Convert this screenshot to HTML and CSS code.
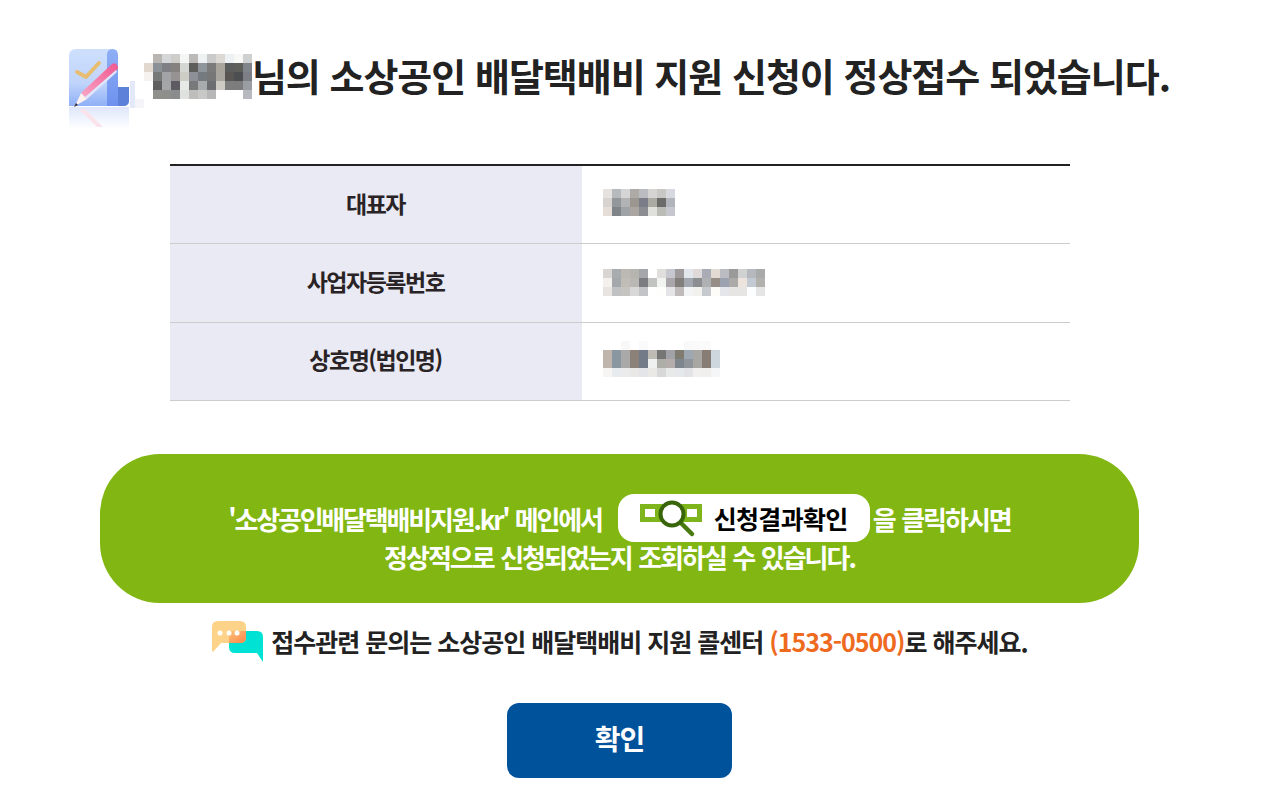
FILE: index.html
```html
<!DOCTYPE html>
<html lang="ko">
<head>
<meta charset="utf-8">
<title>소상공인 배달택배비 지원 신청</title>
<link rel="stylesheet" href="styles.css">
</head>
<body>
<main class="wrap">
  <h1 class="title">
    <svg class="title-icon" width="75" height="82" viewBox="0 0 75 82">
      <defs>
        <linearGradient id="pg" x1="0" y1="0" x2="0" y2="1"><stop offset="0" stop-color="#cfe0fd"/><stop offset="0.6" stop-color="#c0d4fb"/><stop offset="1" stop-color="#8fb0f7"/></linearGradient>
        <linearGradient id="col" x1="0" y1="0" x2="0" y2="1"><stop offset="0" stop-color="#8fb0f5"/><stop offset="1" stop-color="#6d90ef"/></linearGradient>
        <linearGradient id="pen" x1="0" y1="1" x2="1" y2="0"><stop offset="0" stop-color="#f9a9c8"/><stop offset="1" stop-color="#f0568f"/></linearGradient>
        <linearGradient id="rf" x1="0" y1="0" x2="0" y2="1"><stop offset="0" stop-color="#dfe7fc"/><stop offset="1" stop-color="#fff"/></linearGradient>
      </defs>
      <path d="M7 0H44V57H0V7Q0 0 7 0Z" fill="url(#pg)"/>
      <path d="M38 6Q38 0 43.500 0Q49 0 49 6V38H60V51Q60 57 54 57H38Z" fill="url(#col)"/>
      <path d="M49 38H60V51Q60 57 54 57H49Z" fill="#5d80d8"/>
      <path d="M8 23L17 28L30 14" fill="none" stroke="#e7bd72" stroke-width="4" stroke-linejoin="round" stroke-linecap="round"/>
      <path d="M12 44L43 15Q46 13 48 16Q50 19 48 21L18 50Z" fill="url(#pen)"/>
      <path d="M18 50L48 23L47 21L16 48Z" fill="#dfe6fb"/>
      <path d="M12 44L18 50L6 57Z" fill="#fdf2ee"/>
      <path d="M7 54L9 56L5 58Z" fill="#333"/>
      <path d="M0 58H60V80H0Z" fill="url(#rf)"/>
      <path d="M10 60L28 78L34 78L16 60Z" fill="#fbe3ec"/>
      <rect x="61" y="32" width="5" height="27" fill="#e4e9fa"/>
      <rect x="66" y="50" width="9" height="9" fill="#f5f5f9"/>
    </svg>
    <svg class="mosaic-name" width="108" height="45" viewBox="0 0 108 45">
      <rect x="9" y="0" width="9" height="9" fill="#b9b5b2"/><rect x="18" y="0" width="9" height="9" fill="#d4d6d8"/><rect x="27" y="0" width="9" height="9" fill="#cfcdca"/><rect x="36" y="0" width="9" height="9" fill="#f4f6f5"/><rect x="45" y="0" width="9" height="9" fill="#bdb9b9"/><rect x="54" y="0" width="9" height="9" fill="#eff2f2"/><rect x="63" y="0" width="9" height="9" fill="#cbcaca"/><rect x="72" y="0" width="9" height="9" fill="#dcd8d3"/><rect x="81" y="0" width="9" height="9" fill="#eef1f3"/><rect x="90" y="0" width="9" height="9" fill="#f8f8f6"/><rect x="99" y="0" width="9" height="9" fill="#cfd0d0"/>
      <rect x="0" y="9" width="9" height="9" fill="#e2d8cd"/><rect x="9" y="9" width="9" height="9" fill="#8b9097"/><rect x="18" y="9" width="9" height="9" fill="#7e8085"/><rect x="27" y="9" width="9" height="9" fill="#85817f"/><rect x="36" y="9" width="9" height="9" fill="#d5d8d2"/><rect x="45" y="9" width="9" height="9" fill="#5d5d5c"/><rect x="54" y="9" width="9" height="9" fill="#8f969b"/><rect x="63" y="9" width="9" height="9" fill="#7b7b7b"/><rect x="72" y="9" width="9" height="9" fill="#aaa59c"/><rect x="81" y="9" width="9" height="9" fill="#5b5c5c"/><rect x="90" y="9" width="9" height="9" fill="#5e5e5b"/><rect x="99" y="9" width="9" height="9" fill="#7f858b"/>
      <rect x="0" y="18" width="9" height="9" fill="#f5f2ef"/><rect x="9" y="18" width="9" height="9" fill="#777978"/><rect x="18" y="18" width="9" height="9" fill="#a2a3a7"/><rect x="27" y="18" width="9" height="9" fill="#969392"/><rect x="36" y="18" width="9" height="9" fill="#cdcdc5"/><rect x="45" y="18" width="9" height="9" fill="#8d9096"/><rect x="54" y="18" width="9" height="9" fill="#767b80"/><rect x="63" y="18" width="9" height="9" fill="#777777"/><rect x="72" y="18" width="9" height="9" fill="#a9a59f"/><rect x="81" y="18" width="9" height="9" fill="#585754"/><rect x="90" y="18" width="9" height="9" fill="#4c4e52"/><rect x="99" y="18" width="9" height="9" fill="#7c8086"/>
      <rect x="9" y="27" width="9" height="9" fill="#5f5f5f"/><rect x="18" y="27" width="9" height="9" fill="#a4a6a7"/><rect x="27" y="27" width="9" height="9" fill="#5e5c62"/><rect x="36" y="27" width="9" height="9" fill="#e7e9e6"/><rect x="45" y="27" width="9" height="9" fill="#78797a"/><rect x="54" y="27" width="9" height="9" fill="#a8abad"/><rect x="63" y="27" width="9" height="9" fill="#6d6e72"/><rect x="72" y="27" width="9" height="9" fill="#cdcbc4"/><rect x="81" y="27" width="9" height="9" fill="#7d7d7d"/><rect x="90" y="27" width="9" height="9" fill="#7c7c7c"/><rect x="99" y="27" width="9" height="9" fill="#9a9ea3"/>
      <rect x="9" y="36" width="9" height="9" fill="#8f8f8c"/><rect x="18" y="36" width="9" height="9" fill="#8e8e8c"/><rect x="27" y="36" width="9" height="9" fill="#8b8c8e"/><rect x="36" y="36" width="9" height="9" fill="#dfe1de"/><rect x="45" y="36" width="9" height="9" fill="#bfbebc"/><rect x="54" y="36" width="9" height="9" fill="#c8c8c6"/><rect x="63" y="36" width="9" height="9" fill="#b7b7b7"/><rect x="99" y="36" width="9" height="9" fill="#b7b9be"/>
    </svg>
    <span>님의 소상공인 배달택배비 지원 신청이 정상접수 되었습니다.</span>
  </h1>

  <table class="info">
    <tr>
      <th>대표자</th>
      <td>
        <svg class="mosaic mosaic-up" width="72" height="27" viewBox="0 0 72 27">
          <rect x="0" y="0" width="9" height="9" fill="#e6e2df"/><rect x="9" y="0" width="9" height="9" fill="#b6babd"/><rect x="18" y="0" width="9" height="9" fill="#d5d5d5"/><rect x="27" y="0" width="9" height="9" fill="#aeaaa5"/><rect x="36" y="0" width="9" height="9" fill="#babcc2"/><rect x="45" y="0" width="9" height="9" fill="#d5d4d2"/><rect x="54" y="0" width="9" height="9" fill="#c8c7c4"/><rect x="63" y="0" width="9" height="9" fill="#d8d9de"/>
          <rect x="0" y="9" width="9" height="9" fill="#d6d3d1"/><rect x="9" y="9" width="9" height="9" fill="#92979c"/><rect x="18" y="9" width="9" height="9" fill="#b2b3b5"/><rect x="27" y="9" width="9" height="9" fill="#9b9790"/><rect x="36" y="9" width="9" height="9" fill="#7a7d88"/><rect x="45" y="9" width="9" height="9" fill="#aaa9a2"/><rect x="54" y="9" width="9" height="9" fill="#6b6c6a"/><rect x="63" y="9" width="9" height="9" fill="#b1b5bb"/>
          <rect x="0" y="18" width="9" height="9" fill="#e6ddd6"/><rect x="9" y="18" width="9" height="9" fill="#7f8488"/><rect x="18" y="18" width="9" height="9" fill="#9fa2a7"/><rect x="27" y="18" width="9" height="9" fill="#aaa5a1"/><rect x="36" y="18" width="9" height="9" fill="#8b8d92"/><rect x="45" y="18" width="9" height="9" fill="#e0e1dd"/><rect x="54" y="18" width="9" height="9" fill="#bcbcb7"/><rect x="63" y="18" width="9" height="9" fill="#c6c6ce"/>
        </svg>
      </td>
    </tr>
    <tr>
      <th>사업자등록번호</th>
      <td>
        <svg class="mosaic" width="162" height="27" viewBox="0 0 162 27">
          <rect x="0" y="0" width="9" height="9" fill="#d8d5d3"/><rect x="9" y="0" width="9" height="9" fill="#a9acae"/><rect x="18" y="0" width="9" height="9" fill="#bcb9b5"/><rect x="27" y="0" width="9" height="9" fill="#b5b4ae"/><rect x="36" y="0" width="9" height="9" fill="#a3a6ab"/><rect x="54" y="0" width="9" height="9" fill="#e0dfdc"/><rect x="63" y="0" width="9" height="9" fill="#c7c8cf"/><rect x="72" y="0" width="9" height="9" fill="#9f9a9b"/><rect x="81" y="0" width="9" height="9" fill="#e2e7ec"/><rect x="90" y="0" width="9" height="9" fill="#e0d9da"/><rect x="99" y="0" width="9" height="9" fill="#a9acb4"/><rect x="108" y="0" width="9" height="9" fill="#e1dbd4"/><rect x="117" y="0" width="9" height="9" fill="#bbbcc2"/><rect x="126" y="0" width="9" height="9" fill="#9a9a9a"/><rect x="135" y="0" width="9" height="9" fill="#d0d2d2"/><rect x="144" y="0" width="9" height="9" fill="#b5b9bd"/><rect x="153" y="0" width="9" height="9" fill="#a9aaaa"/>
          <rect x="0" y="9" width="9" height="9" fill="#f4f0ec"/><rect x="9" y="9" width="9" height="9" fill="#a4a8ac"/><rect x="18" y="9" width="9" height="9" fill="#c0bcb6"/><rect x="27" y="9" width="9" height="9" fill="#b9b8b4"/><rect x="36" y="9" width="9" height="9" fill="#7b7c82"/><rect x="45" y="9" width="9" height="9" fill="#c2c4c1"/><rect x="54" y="9" width="9" height="9" fill="#f1f4ef"/><rect x="63" y="9" width="9" height="9" fill="#aaa6ac"/><rect x="72" y="9" width="9" height="9" fill="#827e7c"/><rect x="81" y="9" width="9" height="9" fill="#a3a8b0"/><rect x="90" y="9" width="9" height="9" fill="#8c8e92"/><rect x="99" y="9" width="9" height="9" fill="#aeb0b2"/><rect x="108" y="9" width="9" height="9" fill="#978e88"/><rect x="117" y="9" width="9" height="9" fill="#9ba1af"/><rect x="126" y="9" width="9" height="9" fill="#aca9a9"/><rect x="135" y="9" width="9" height="9" fill="#ece4dd"/><rect x="144" y="9" width="9" height="9" fill="#c4cad4"/><rect x="153" y="9" width="9" height="9" fill="#b2b1ae"/>
          <rect x="0" y="18" width="9" height="9" fill="#e8e4e1"/><rect x="9" y="18" width="9" height="9" fill="#bfc1c3"/><rect x="18" y="18" width="9" height="9" fill="#c5c4c1"/><rect x="27" y="18" width="9" height="9" fill="#d8d8d8"/><rect x="36" y="18" width="9" height="9" fill="#c2c4c7"/><rect x="54" y="18" width="9" height="9" fill="#fefefb"/><rect x="63" y="18" width="9" height="9" fill="#e5e5e9"/><rect x="72" y="18" width="9" height="9" fill="#c0bbbb"/><rect x="81" y="18" width="9" height="9" fill="#f3f4f6"/><rect x="90" y="18" width="9" height="9" fill="#f3f1ee"/><rect x="99" y="18" width="9" height="9" fill="#c6cace"/><rect x="108" y="18" width="9" height="9" fill="#fefcf8"/><rect x="117" y="18" width="9" height="9" fill="#e5e6eb"/><rect x="126" y="18" width="9" height="9" fill="#e6e5e4"/><rect x="135" y="18" width="9" height="9" fill="#e7e5e3"/><rect x="144" y="18" width="9" height="9" fill="#fcfdfe"/><rect x="153" y="18" width="9" height="9" fill="#e5e5e5"/>
        </svg>
      </td>
    </tr>
    <tr>
      <th>상호명(법인명)</th>
      <td>
        <svg class="mosaic mosaic-up" width="117" height="36" viewBox="0 0 117 36">
          <rect x="18" y="0" width="9" height="9" fill="#f8f8f8"/><rect x="36" y="0" width="9" height="9" fill="#fafafa"/><rect x="81" y="0" width="9" height="9" fill="#f9f9f9"/><rect x="90" y="0" width="9" height="9" fill="#fafafa"/><rect x="99" y="0" width="9" height="9" fill="#fafafa"/>
          <rect x="0" y="9" width="9" height="9" fill="#bfb5ad"/><rect x="9" y="9" width="9" height="9" fill="#8a97a1"/><rect x="18" y="9" width="9" height="9" fill="#a9a9a9"/><rect x="27" y="9" width="9" height="9" fill="#8c8178"/><rect x="36" y="9" width="9" height="9" fill="#737b89"/><rect x="45" y="9" width="9" height="9" fill="#bdbbb3"/><rect x="54" y="9" width="9" height="9" fill="#767674"/><rect x="63" y="9" width="9" height="9" fill="#a1a2a8"/><rect x="72" y="9" width="9" height="9" fill="#7f7b70"/><rect x="81" y="9" width="9" height="9" fill="#9ca7b2"/><rect x="90" y="9" width="9" height="9" fill="#a8a7a3"/><rect x="99" y="9" width="9" height="9" fill="#877d75"/><rect x="108" y="9" width="9" height="9" fill="#ced6de"/>
          <rect x="0" y="18" width="9" height="9" fill="#bfb5ad"/><rect x="9" y="18" width="9" height="9" fill="#8a97a1"/><rect x="18" y="18" width="9" height="9" fill="#a9a9a9"/><rect x="27" y="18" width="9" height="9" fill="#8c8178"/><rect x="36" y="18" width="9" height="9" fill="#737b89"/><rect x="45" y="18" width="9" height="9" fill="#eef1f0"/><rect x="54" y="18" width="9" height="9" fill="#adaea8"/><rect x="63" y="18" width="9" height="9" fill="#b5acac"/><rect x="72" y="18" width="9" height="9" fill="#7d858d"/><rect x="81" y="18" width="9" height="9" fill="#90959b"/><rect x="90" y="18" width="9" height="9" fill="#a8a7a3"/><rect x="99" y="18" width="9" height="9" fill="#877d75"/><rect x="108" y="18" width="9" height="9" fill="#ced6de"/>
          <rect x="0" y="27" width="9" height="9" fill="#f6f5f4"/><rect x="9" y="27" width="9" height="9" fill="#e7eaee"/><rect x="18" y="27" width="9" height="9" fill="#ebebeb"/><rect x="27" y="27" width="9" height="9" fill="#e9e8e6"/><rect x="36" y="27" width="9" height="9" fill="#e3e5e9"/><rect x="45" y="27" width="9" height="9" fill="#eae9e6"/><rect x="54" y="27" width="9" height="9" fill="#d8d8d8"/><rect x="63" y="27" width="9" height="9" fill="#e8eaea"/><rect x="72" y="27" width="9" height="9" fill="#e6e9eb"/><rect x="81" y="27" width="9" height="9" fill="#e1e3e6"/><rect x="90" y="27" width="9" height="9" fill="#f2f0ee"/><rect x="99" y="27" width="9" height="9" fill="#f0efed"/><rect x="108" y="27" width="9" height="9" fill="#f5f6f8"/>
        </svg>
      </td>
    </tr>
  </table>

  <section class="banner">
    <p class="banner-line"><span class="banner-lead">'소상공인배달택배비지원.kr' 메인에서</span><span class="result-chip"><svg width="64" height="40" viewBox="0 0 64 40"><path d="M0 6H62V24H0Z M5 11V19H15V11Z M47 11V19H57V11Z" fill="#7fb51c" fill-rule="evenodd"/><path d="M40 24L52 36" stroke="#4a7a0f" stroke-width="4.500" stroke-linecap="round"/><circle cx="32" cy="16" r="11.500" fill="#fff" stroke="#386507" stroke-width="4"/></svg><b>신청결과확인</b></span><span>을 클릭하시면</span></p>
    <p class="banner-line">정상적으로 신청되었는지 조회하실 수 있습니다.</p>
  </section>

  <p class="contact">
    <svg width="53" height="43" viewBox="0 0 53 43">
      <defs><linearGradient id="ov" x1="0" y1="0" x2="1" y2="1"><stop offset="0" stop-color="#fdc27a"/><stop offset="1" stop-color="#fb8547"/></linearGradient></defs>
      <path d="M24 11H46Q52 11 52 17V42L46 33H24Q18 33 18 27V17Q18 11 24 11Z" fill="#00e2d4"/>
      <path d="M7 1H29Q35 1 35 7V17Q35 23 29 23H10L2 32Q1 32 1 30V7Q1 1 7 1Z" fill="#fdd389"/>
      <path d="M18 11H35V17Q35 23 29 23H18Z" fill="url(#ov)"/>
      <circle cx="9" cy="13" r="2.500" fill="#fff"/><circle cx="18" cy="13" r="2.500" fill="#fff"/><circle cx="26" cy="13" r="2.500" fill="#fff"/>
    </svg>
    <span>접수관련 문의는 소상공인 배달택배비 지원 콜센터 <em>(1533-0500)</em>로 해주세요.</span>
  </p>

  <div class="actions"><button class="confirm" type="button">확인</button></div>
</main>
</body>
</html>
```

FILE: styles.css
```css
* { box-sizing: border-box; }
html, body { margin: 0; padding: 0; background: #fff; }
body {
  font-family: "Noto Sans CJK KR", "Noto Sans", sans-serif;
  color: #222;
}
.wrap {
  width: 1239px;
  height: 812px;
  overflow: hidden;
  padding-top: 49px;
}
.title {
  display: flex;
  justify-content: center;
  align-items: flex-start;
  height: 81px;
  margin: 0 0 34px;
  font-size: 38px;
  font-weight: 700;
  letter-spacing: -1px;
  line-height: 52px;
  white-space: nowrap;
}
.title-icon { flex: none; }
.mosaic-name { margin-top: 5px; flex: none; }
.mosaic { display: block; }
.mosaic-up { margin-top: -4px; }
.info {
  width: 900px;
  margin: 0 auto;
  border-collapse: collapse;
  border-top: 2px solid #222;
}
.info th, .info td {
  height: 78.500px;
  padding: 0;
  border-bottom: 1px solid #ccc;
}
.info th {
  width: 412px;
  padding-bottom: 4px;
  background: #e9eaf3;
  font-size: 23px;
  font-weight: 700;
  letter-spacing: -1.5px;
  text-align: center;
  color: #2a2326;
}
.info td { padding-left: 21px; }
.banner {
  width: 1039px;
  height: 149px;
  margin: 53px auto 0;
  padding-top: 40px;
  border-radius: 60px;
  background: #82b713;
  color: #fff;
}
.banner-line {
  display: flex;
  justify-content: center;
  align-items: center;
  margin: 0;
  height: 48px;
  font-size: 26px;
  font-weight: 700;
  letter-spacing: -2px;
  word-spacing: 1.2px;
  white-space: nowrap;
}
.banner-line + .banner-line { height: 28px; }
.banner-lead { letter-spacing: -2.2px; }
.result-chip {
  display: inline-flex;
  align-items: center;
  width: 252px;
  height: 48px;
  margin: 0 3px 0 16px;
  padding-left: 22px;
  border-radius: 16px;
  background: #fff;
  color: #000;
}
.result-chip svg { flex: none; }
.result-chip b { margin-left: 10px; font-weight: 700; font-size: 25px; letter-spacing: -0.7px; }
.contact {
  display: flex;
  justify-content: center;
  align-items: center;
  height: 43px;
  margin: 17px 0 0;
  font-size: 25px;
  font-weight: 700;
  letter-spacing: -1px;
  color: #222;
  white-space: nowrap;
}
.contact svg { margin-right: 7px; flex: none; }
.contact span { padding-bottom: 2px; }
.contact em { font-style: normal; color: #ee6a1f; }
.actions { display: flex; justify-content: center; margin-top: 40px; }
.confirm {
  width: 225px;
  height: 75px;
  padding: 0 0 5px;
  border: 0;
  border-radius: 12px;
  background: #00529b;
  color: #fff;
  font: 700 28px "Noto Sans CJK KR", sans-serif;
  letter-spacing: -1px;
}
```
